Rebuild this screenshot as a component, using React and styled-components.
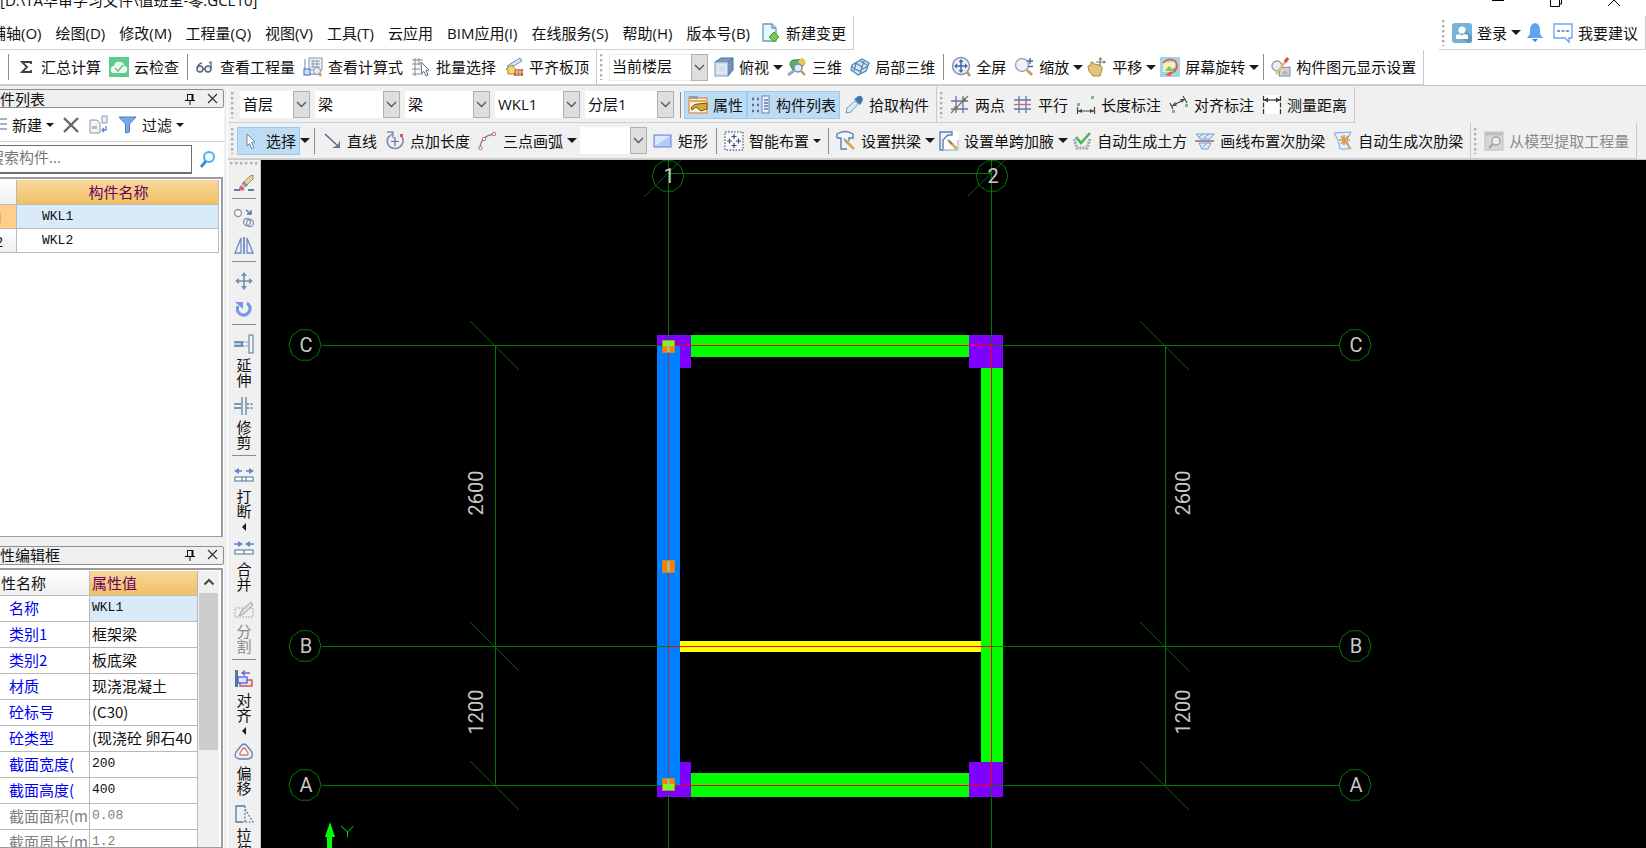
import React from "react";
import styled, { createGlobalStyle, css } from "styled-components";

const Global = createGlobalStyle`
  * { box-sizing: border-box; }
  body { margin: 0; background: #fff; overflow: hidden; }
  body, button, select, input, table {
    font-family: "Open Sans", "Noto Sans CJK SC", sans-serif;
    font-size: 15px;
    color: #111;
  }
  button { border: 0; padding: 0; margin: 0; background: none; white-space: nowrap; }
`;

/* ---------- page frame ---------- */
const Page = styled.div`
  display: flex;
  flex-direction: column;
  height: 100vh;
  background: #fff;
`;
const TitleBar = styled.header`
  display: flex;
  align-items: center;
  justify-content: space-between;
  flex: none;
  height: 32px;
  margin-top: -16px;
  padding-right: 24px;
`;
const Title = styled.h1`
  margin: 0;
  font-size: 15px;
  font-weight: 400;
  line-height: 20px;
  white-space: nowrap;
`;
const WindowButtons = styled.div`
  display: flex;
  gap: 42px;
  svg { display: block; width: 16px; height: 16px; }
`;
const Row = styled.div`
  display: flex;
  justify-content: ${(p) => (p.$start ? "flex-start" : "space-between")};
  flex: none;
  height: ${(p) => p.$h || 36}px;
  background: ${(p) => (p.$grey ? "#f0f0f0" : "#fff")};
  ${(p) => p.$line && css`border-bottom: 1px solid #c9c9c9;`}
`;
const Section = styled.div`
  display: flex;
  align-items: center;
  padding-right: 3px;
  padding-left: ${(p) => (p.$first ? "4px" : "0")};
  border-right: 1px solid #c9c9c9;
  border-bottom: 1px solid #d0d0d0;
`;
const MenuBar = styled.nav`
  display: flex;
  align-items: center;
  margin-left: -16px;
  padding-right: 3px;
  border-right: 1px solid #d0d0d0;
  border-bottom: 1px solid #d0d0d0;
`;
const MenuItem = styled.button`
  padding: 0 7px;
  line-height: 24px;
`;
const Grip = styled.span`
  flex: none;
  width: ${(p) => (p.$flat ? "28px" : "3px")};
  height: ${(p) => (p.$flat ? "3px" : "26px")};
  margin: ${(p) => (p.$flat ? "2px 0 4px" : "0 3px")};
  background-image: radial-gradient(circle at 1px 1px, #b0b0b0 1px, transparent 2px);
  background-size: ${(p) => (p.$flat ? "5px 3px" : "3px 5px")};
`;
const Sep = styled.span`
  flex: none;
  width: ${(p) => (p.$flat ? "24px" : "1px")};
  height: ${(p) => (p.$flat ? "1px" : "26px")};
  margin: ${(p) => (p.$flat ? "1px 0 5px" : "0 3px 0 4px")};
  background: #8c8c8c;
`;
const ToolButton = styled.button`
  display: flex;
  align-items: center;
  gap: 5px;
  height: 28px;
  padding: 0 4px;
  line-height: 24px;
  color: ${(p) => (p.$off ? "#8a8a8a" : "#111")};
  ${(p) => p.$on && css`background: #bddcf4; box-shadow: inset 0 0 0 1px #99ccf5;`}
`;
const DropButton = styled.button`
  width: ${(p) => (p.$small ? "11px" : "10px")};
  height: 28px;
  display: flex;
  align-items: center;
  justify-content: ${(p) => (p.$small ? "flex-start" : "flex-end")};
  &::before {
    content: "";
    border: solid transparent;
    border-width: ${(p) => (p.$small ? "4px 4px 0" : "5px 5px 0")};
    border-top-color: #1a1a1a;
  }
`;
const ComboBox = styled.label`
  display: grid;
  width: ${(p) => p.$w}px;
  height: 27px;
  margin: 0 2px 0 3px;
  background: #fff;
  ${(p) => p.$framed && css`box-shadow: inset 0 0 0 1px #ececec;`}
  select {
    grid-area: 1 / 1;
    appearance: none;
    border: 0;
    background: none;
    padding: 0 18px 2px 3px;
    margin: 0;
    min-width: 0;
  }
`;
const ComboArrow = styled.span`
  grid-area: 1 / 1;
  justify-self: end;
  display: grid;
  place-items: center;
  width: 17px;
  border: 1px solid #b0b0b0;
  background: #dedede;
  pointer-events: none;
`;
const Svg = styled.svg`
  flex: none;
  display: block;
  width: 20px;
  height: 20px;
  overflow: visible;
`;

/* ---------- icons ---------- */
const P = ({ d, c = "#5b6f96", w = 1.3, f = "none" }) => (
  <path d={d} stroke={c} strokeWidth={w} fill={f} />
);
const icons = {
  newDoc: (
    <>
      <P d="M2 1H11L15 5V18H2Z" c="#5e9fc4" f="#e8f6fd" />
      <P d="M11 1V5H15" c="#5e9fc4" f="#bfe1f3" />
      <P d="M13 9L18 14L13 19L8 14Z" c="#4a9a2c" w={1} f="#74c94a" />
    </>
  ),
  user: (
    <>
      <rect x="0" y="0" width="20" height="20" rx="3" fill="#76b3d6" />
      <path d="M10 16L16 20H17Q20 20 20 17V13L13 7Z" fill="#5c9cc3" />
      <circle cx="10" cy="7" r="3.6" fill="#fff" />
      <path d="M4 12L8 11L10 13L12 11L16 12V16H4Z" fill="#fff" />
    </>
  ),
  bell: (
    <>
      <path d="M10 0Q15 1 15 7V11L18 15H2L5 11V7Q5 1 10 0Z" fill="#5ba4f2" />
      <path d="M7 16H13L10 19Z" fill="#4b78b8" />
    </>
  ),
  chat: (
    <>
      <P d="M1 1H19V15H16V19L12 15H1Z" c="#6aa9ee" w={1.4} f="#fff" />
      <path d="M4 8H16" stroke="#4b78c0" strokeWidth="1.5" strokeDasharray="3 1.5" />
    </>
  ),
  sum: <P d="M15 7V5H6L11 10L6 15H15V13" c="#404040" w={1.8} />,
  cloudCheck: (
    <>
      <rect width="20" height="20" fill="#5fcb8b" />
      <path d="M5 16Q1 16 2 12Q2 9 5 9Q6 4 11 5Q15 5 15 9Q19 9 18 13Q18 16 15 16Z" fill="#f1faf4" />
      <P d="M6 11L9 14L14 8" c="#5fcb8b" w={1.6} />
    </>
  ),
  glasses: (
    <>
      <circle cx="5" cy="12" r="3" fill="#e7edf3" stroke="#5a6675" strokeWidth="1.4" />
      <circle cx="13" cy="12" r="3" fill="#e7edf3" stroke="#5a6675" strokeWidth="1.4" />
      <P d="M8 12H10M2 11Q3 7 7 6M16 12V5L14 6" c="#5a6675" />
    </>
  ),
  calcView: (
    <>
      <rect x="6" y="1" width="13" height="12" fill="#eef1f8" stroke="#8b94ad" />
      <P d="M8 4H17M8 7H17M8 10H17M10 3V11M14 3V11" c="#8b94ad" w={0.9} />
      <P d="M2 2V17H18" c="#8fa0cc" />
      <rect x="1" y="12" width="6" height="6" fill="#cfdcff" stroke="#4a66c0" />
      <circle cx="14" cy="14" r="3.5" fill="#e9eef6" stroke="#8b94ad" />
      <P d="M16 16L18 19" c="#e39b45" w={2.6} />
    </>
  ),
  batch: (
    <>
      <P d="M1 3H12M1 7H9M1 12H9M1 17H12M4 1V19M8 1V8" c="#7d8699" w={1} />
      <path d="M10 5L18 13L15 13.5L17 18L15 19L13 14.5L10.500 16Z" fill="#fff" stroke="#5b6884" />
    </>
  ),
  flatTop: (
    <>
      <path d="M3 9L16 1L18 4L6 11Z" fill="#dbe6fa" stroke="#6b86bd" />
      <path d="M2 12L8 8L12 13V17H4V13Z" fill="#f6d96a" stroke="#a3822b" />
      <path d="M11 12H19V19H10V16Z" fill="#c5684c" />
      <P d="M13 12V19M16 12V19M11 15H19" c="#f5dcd0" w={0.8} />
    </>
  ),
  cube: (
    <>
      <path d="M1 5L7 1H19L14 5Z" fill="#7d9cc4" stroke="#4d6f9d" />
      <path d="M14 5L19 1V13L14 19Z" fill="#7592b8" stroke="#4d6f9d" />
      <rect x="1" y="5" width="13" height="14" fill="#cfe0ef" stroke="#7ca0c4" />
      <P d="M4 8H12V16H4Z" c="#eaf4fb" w={1} />
    </>
  ),
  view3d: (
    <>
      <path d="M3 8Q3 2 9 3L16 2L18 7L12 12L6 13Z" fill="#5fae6e" stroke="#39804b" />
      <circle cx="15" cy="5" r="3.5" fill="#eac750" />
      <P d="M1 18L8 13" c="#a1a9b5" w={3} />
      <circle cx="11" cy="11" r="4" fill="#e1eef7" stroke="#6d8fb0" strokeWidth="1.4" />
      <P d="M14 14L18 18" c="#c7963f" w={2.4} />
    </>
  ),
  local3d: (
    <>
      <path d="M2 8L12 2L19 6L16 14L8 18L1 13Z" fill="#d5e6f4" stroke="#5486b3" strokeWidth="1.3" />
      <P d="M6 6L12 10L10 17M10 4L17 8M2 10L9 14L18 9M6 6L4 14M12 10L14 4" c="#5486b3" />
    </>
  ),
  fullView: (
    <>
      <circle cx="10" cy="9" r="8.500" fill="#e9eff9" stroke="#8592ab" strokeWidth="1.4" />
      <P d="M10 4V14M5 9H15" c="#4b64a5" w={1.5} />
      <path d="M10 2L12.500 5H7.500ZM10 16L12.500 13H7.500ZM3 9L6 6.500V11.500ZM17 9L14 6.500V11.500Z" fill="#4b64a5" />
      <P d="M16 15L19 19" c="#cf9148" w={2.6} />
    </>
  ),
  zoom: (
    <>
      <circle cx="8" cy="8" r="6.500" fill="#eef3fa" stroke="#9aa6ba" strokeWidth="1.4" />
      <P d="M13 13L18 18" c="#cf9f48" w={2.8} />
      <P d="M16 1V7M13 4H19M14 9.500H19" c="#4b64a5" w={1.4} />
    </>
  ),
  pan: (
    <>
      <path d="M1 10Q1 8 4 8L4 5Q6 4 7 7L12 8Q16 9 15 13L13 19H6L2 14Z" fill="#e6c477" stroke="#a98645" />
      <P d="M13 1V9M9 5H18" c="#777" w={1.2} />
      <path d="M13.500 0L15.500 2.500H11.500ZM19 5L16.500 3V7Z" fill="#777" />
    </>
  ),
  screenRotate: (
    <>
      <rect width="20" height="20" fill="#9fd6ea" />
      <rect x="3" y="5" width="12" height="10" fill="#f3f2b4" />
      <path d="M5 14L9 9L12 12L16 10V14Z" fill="#7dc07a" />
      <P d="M3 6Q9 0 15 4Q19 9 15 14L8 18" c="#e35a4e" w={1.7} />
      <path d="M5 18L11 14V19Z" fill="#e35a4e" />
    </>
  ),
  display: (
    <>
      <circle cx="6" cy="9" r="5" fill="#eaf0f7" stroke="#8f9cb0" strokeWidth="1.3" />
      <path d="M9 11L19 10V19H8Z" fill="#c9d5ea" stroke="#7388b0" />
      <P d="M5 17L15 4" c="#e2bd72" w={2.6} />
      <P d="M14 5L17 1" c="#c5534a" w={3} />
      <path d="M14 13L17 17H11Z" fill="#e9a544" />
    </>
  ),
  props: (
    <>
      <rect x="1" y="3" width="18" height="15" fill="#fdf1dc" stroke="#dd9a4d" strokeWidth="1.4" />
      <path d="M1 1H10V4H1Z" fill="#9a9a9a" />
      <P d="M2 6H18" c="#e5a661" w={2} />
      <path d="M3 13Q7 8 10 9L19 8V14L13 16L8 12L4 15Z" fill="#d9a830" stroke="#6e5418" />
    </>
  ),
  list: (
    <>
      <path d="M1 4H4M1 10H4M1 16H4M6 4H9M6 10H9M6 16H9" stroke="#5d6b85" strokeWidth="2.4" strokeDasharray="2 1" />
      <rect x="11" y="1" width="7" height="17" fill="#eaf1fb" stroke="#6c83ae" />
      <P d="M13 5H17M13 8H17M13 11H17M13 14H17" c="#5878b8" />
    </>
  ),
  picker: (
    <>
      <path d="M3 13L11 6L14 9L7 17L2 18Z" fill="#dcebf6" stroke="#6e9bc2" />
      <path d="M10 4L16 10L18 7Q20 3 17 1Q14 0 12 3Z" fill="#3f74ad" />
    </>
  ),
  twoPoints: (
    <>
      <P d="M1 6H18M1 14H18M6 1V18M13 1V18" c="#6773a8" />
      <P d="M1 18L18 1" c="#c75454" />
      <circle cx="6" cy="13" r="2" fill="#3f9d45" />
      <circle cx="14" cy="5" r="2" fill="#3f9d45" />
    </>
  ),
  parallel: (
    <>
      <P d="M1 5H18M1 14H18M6 1V18M13 1V18" c="#6773a8" />
      <P d="M1 9.500H18" c="#d96464" />
    </>
  ),
  lengthDim: (
    <>
      <P d="M1.500 12V19M18.500 12V19M2 16H18" c="#444" w={1.2} />
      <path d="M2 16L6 14V18ZM18 16L14 14V18Z" fill="#444" />
      <rect x="1" y="8" width="3" height="3" fill="#6cc76c" />
      <rect x="15" y="1" width="3" height="3" fill="#6cc76c" />
    </>
  ),
  alignDim: (
    <>
      <P d="M1 8L4 14M14 1L18 8M3 11L16 4" c="#444" w={1.2} />
      <path d="M3 11L6 7L8 11ZM16 4L11 4L13 8Z" fill="#555" />
      <rect x="3" y="15" width="3" height="3" fill="#6cc76c" />
      <rect x="16" y="9" width="3" height="3" fill="#6cc76c" />
    </>
  ),
  measure: (
    <>
      <rect width="20" height="19" fill="#fff" />
      <path d="M1.500 1V19M18.500 1V19" stroke="#333" strokeWidth="1.3" strokeDasharray="5 1.5" />
      <P d="M2 5H18" c="#333" />
      <path d="M2 5L6 2.500V7.500ZM18 5L14 2.500V7.500Z" fill="#333" />
    </>
  ),
  cursor: <path d="M6 3L14 11L10.500 11.500L13 16.500L10.500 17.500L8.500 12.500L6 15Z" fill="#fff" stroke="#7a8494" />,
  line: (
    <>
      <P d="M3 3L16 15" c="#4a5c7a" w={1.2} />
      <path d="M18 17V9L16 14L10 17Z" fill="#5d7296" />
    </>
  ),
  pointLength: (
    <>
      <P d="M4 5Q0 11 5 16Q10 19 15 16Q20 11 17 6" c="#7c8fae" w={1.7} />
      <P d="M2 1H8V7M8 2L4 6" c="#7c8fae" w={1.4} />
      <P d="M10 6V15M6 10.500H14" c="#5b7197" w={1.2} />
      <rect x="15" y="3" width="3" height="3" fill="#d95c5c" />
    </>
  ),
  arc: (
    <>
      <P d="M2 17Q3 5 16 3" c="#7085b0" w={1.3} />
      <circle cx="2.500" cy="17" r="1.700" fill="#fff" stroke="#d9664f" />
      <circle cx="6" cy="8" r="1.700" fill="#fff" stroke="#d9664f" />
      <circle cx="16" cy="3" r="1.700" fill="#fff" stroke="#d9664f" />
    </>
  ),
  rect: (
    <>
      <rect x="1" y="4" width="17" height="12" fill="#b6cafa" stroke="#6784cf" />
      <path d="M2 5H17L2 15Z" fill="#dbe6ff" />
    </>
  ),
  smart: (
    <>
      <rect x="1" y="1" width="18" height="18" fill="#f7f9fc" stroke="#5f6f8f" strokeWidth="1.4" strokeDasharray="1.500 1.500" />
      <P d="M10 3V8M7.500 5.500H12.500M10 12V17M7.500 14.500H12.500M5.500 7.500V12.500M3 10H8M14.500 7.500V12.500M12 10H17" c="#3d4c6b" w={1.2} />
    </>
  ),
  archBeam: (
    <>
      <P d="M1 7V3Q9 -2 17 3V7H13V10M1 7H5V18H11" c="#5e7fae" w={1.4} f="#eef4fb" />
      <P d="M10 10L18 18" c="#d7a94e" w={2.6} />
      <P d="M8 8L12 12" c="#9a9a9a" w={2} />
    </>
  ),
  haunch: (
    <>
      <rect width="20" height="20" fill="#fff" />
      <P d="M1 1H13V4H9L4 9V19H1Z" c="#5e7fae" w={1.4} f="#eef4fb" />
      <P d="M4 19H19V9" c="#a9bfdc" />
      <P d="M11 11L18 18" c="#d7a94e" w={2.6} />
      <P d="M9 9L13 13" c="#888" w={2} />
    </>
  ),
  earth: (
    <>
      <path d="M2 8L5 17H15L18 8" fill="none" stroke="#9fa6b5" strokeWidth="3" strokeDasharray="2 1" />
      <P d="M4 6L9 12L18 2" c="#48b552" w={2.6} />
    </>
  ),
  drawRib: (
    <>
      <path d="M1 3H19L15 8H5Z" fill="#d9ebfa" stroke="#6a9fd1" />
      <path d="M4 12H16L13 18H7Z" fill="#d9ebfa" stroke="#6a9fd1" />
      <P d="M0 10H19" c="#a66d6d" w={1.6} />
      <P d="M4 6L8 3M9 7L14 3M8 16L12 12" c="#6a9fd1" w={1} />
    </>
  ),
  autoRib: (
    <>
      <path d="M1 2L18 1L14 9L16 18L7 18L5 9Z" fill="#e4f1fc" stroke="#71a8d8" />
      <P d="M11 4V14M6 9H17M8 5L18 18M15 5L8 13" c="#dc9b4a" w={1.7} />
    </>
  ),
  extract: (
    <>
      <rect x="1" y="1" width="18" height="18" fill="#d6d6d6" stroke="#bdbdbd" />
      <P d="M1 3H19" c="#bdbdbd" w={2.500} />
      <circle cx="12" cy="10" r="4" fill="#eee" stroke="#a3a3a3" strokeWidth="1.400" />
      <P d="M9 13L5 17" c="#a3a3a3" w={2} />
    </>
  ),
  menuLines: <P d="M8 4H20M8 9H20M8 14H20" c="#8a99b3" w={1.4} />,
  remove: <P d="M3 3L17 17M17 3L3 17" c="#666" w={2.400} />,
  copyTo: (
    <>
      <path d="M1 5H8L11 8V18H1Z" fill="#f2f4f8" stroke="#8c97ab" />
      <rect x="3" y="11" width="5" height="3" fill="#aeb8c9" />
      <path d="M13 1H18V8H13Z" fill="#eaf0fb" stroke="#8c97ab" />
      <P d="M13 15H17V11M15 13L13 15L15 17" c="#6a84d6" w={1.400} />
    </>
  ),
  filter: <path d="M2 2H19L12.500 9V17L8.500 18V9Z" fill="#7ba6e6" stroke="#4f7cc6" />,
  search: (
    <>
      <circle cx="11" cy="7" r="5" fill="#eef9ff" stroke="#49b1e8" strokeWidth="2" />
      <P d="M8 11L3 17" c="#2f92d8" w={2.800} />
    </>
  ),
  eraser: (
    <>
      <P d="M0 17H6M14 17H20" c="#5c7fa3" w={2} />
      <path d="M8 11L16 3L19 2V6L11 14Z" fill="#f2d27a" stroke="#8b8f9d" />
      <path d="M7 12L11 16L8 18Q5 17 5 15Z" fill="#e05c86" />
      <P d="M9 9L13 13" c="#7d8797" w={2} />
    </>
  ),
  copy: (
    <>
      <circle cx="4" cy="5" r="3.500" fill="#f8f8f8" stroke="#8794a8" strokeWidth="1.300" />
      <circle cx="13" cy="14" r="3.500" fill="none" stroke="#8794a8" strokeWidth="1.300" />
      <circle cx="16" cy="15" r="3.500" fill="none" stroke="#8794a8" strokeWidth="1.300" />
      <P d="M12 2L17 6M17 2V6H13" c="#4c72b0" w={1.400} />
    </>
  ),
  mirror: (
    <>
      <path d="M1 17L7 2V17ZM19 17L13 2V17Z" fill="#e9effb" stroke="#6f8ac0" strokeWidth="1.300" />
      <P d="M10 1V18" c="#6f8ac0" w={1.800} />
    </>
  ),
  move: (
    <>
      <P d="M10 3V17M3 10H17" c="#728fae" w={1.600} />
      <path d="M10 1L13 5H7ZM10 19L13 15H7ZM1 10L5 7V13ZM19 10L15 7V13Z" fill="#728fae" />
    </>
  ),
  rotate: (
    <>
      <P d="M13 4Q18 8 15 13Q11 18 6 15Q2 12 4 7" c="#7498e0" w={3} />
      <path d="M1 3H9V10Z" fill="#7498e0" />
    </>
  ),
  extend: (
    <>
      <P d="M0 8H8V12H0" c="#53789f" w={1.600} f="#b9cfe4" />
      <path d="M9 8H14M9 12H14" stroke="#53789f" strokeDasharray="1.500 1.500" />
      <rect x="15" y="1" width="4" height="18" fill="#eef4fa" stroke="#53789f" />
    </>
  ),
  trim: (
    <>
      <P d="M0 8H7M0 12H7" c="#53789f" w={1.300} />
      <path d="M13 8H20M13 12H20" stroke="#53789f" strokeWidth="1.300" strokeDasharray="2 1.500" />
      <path d="M8 1V19M12 1V19" stroke="#53789f" strokeWidth="1.200" />
    </>
  ),
  split: (
    <>
      <P d="M2 6H8M12 6H18" c="#5f84cb" w={1.400} />
      <path d="M0 6L5 3V9ZM20 6L15 3V9Z" fill="#5f84cb" />
      <rect x="1" y="12" width="18" height="4" fill="#fff" stroke="#6784a6" strokeWidth="1.200" />
      <P d="M8 12V16M12 12V16" c="#6784a6" />
    </>
  ),
  merge: (
    <>
      <P d="M0 6H6M14 6H20" c="#5f84cb" w={1.400} />
      <path d="M9 6L4 3V9ZM11 6L16 3V9Z" fill="#5f84cb" />
      <rect x="1" y="12" width="18" height="4" fill="#fff" stroke="#6784a6" strokeWidth="1.200" />
      <P d="M10 12V16" c="#6784a6" />
    </>
  ),
  divide: (
    <>
      <path d="M1 8H19V17H1Z" fill="none" stroke="#adadad" strokeDasharray="2 1" />
      <path d="M5 16L8 10L17 2L19 5L11 13Z" fill="#ddd" stroke="#a3a3a3" />
    </>
  ),
  align: (
    <>
      <P d="M2.500 1V18" c="#4c7f95" w={3} />
      <rect x="6" y="11" width="12" height="6" fill="#f6dede" stroke="#b74b4b" strokeWidth="1.300" />
      <rect x="4" y="8" width="9" height="6" fill="#dfe6ff" stroke="#4a5fe0" strokeWidth="1.300" />
      <P d="M8 4H16M11 1.500L8 4L11 6.500" c="#6f63c4" />
    </>
  ),
  offset: (
    <>
      <path d="M6 5Q10 -1 14 5L18 10Q20 17 13 17H6Q-1 16 2 10Z" fill="#e4eff8" stroke="#5b87a8" strokeWidth="1.300" />
      <path d="M8 8Q10 4 12 8L14 11Q14 14 11 13H8Q5 13 6 11Z" fill="#fff" stroke="#e0705c" strokeWidth="1.300" />
    </>
  ),
  stretch: (
    <>
      <P d="M11 2H2V18H9" c="#53789f" w={1.300} />
      <path d="M11 2V18M11 5L19 18H9" fill="none" stroke="#53789f" strokeWidth="1.200" strokeDasharray="2 1.500" />
    </>
  ),
};
const Icon = ({ name }) => (
  <Svg viewBox="0 0 20 20" aria-hidden="true">{icons[name]}</Svg>
);

/* ---------- toolbar parts ---------- */
const Tool = ({ icon, label, on, off, drop }) => (
  <>
    <ToolButton $on={on} $off={off} disabled={off} aria-label={label || icon}>
      <Icon name={icon} />
      {label}
    </ToolButton>
    {drop && <DropButton $small={drop === "small"} aria-label={`${label} 选项`} />}
  </>
);
const Combo = ({ w, value, name, framed }) => (
  <ComboBox $w={w} $framed={framed}>
    <select aria-label={name} defaultValue={value}>
      <option>{value}</option>
    </select>
    <ComboArrow>
      <svg width="11" height="7" viewBox="0 0 11 7">
        <path d="M1 1L5.500 5.500L10 1" fill="none" stroke="#555" strokeWidth="1.300" />
      </svg>
    </ComboArrow>
  </ComboBox>
);

/* ---------- left side ---------- */
const Body = styled.div`
  flex: 1;
  display: flex;
  min-height: 0;
  background: #f0f0f0;
`;
const Aside = styled.aside`
  flex: none;
  display: flex;
  flex-direction: column;
  gap: 9px;
  width: 242px;
  margin-left: -18px;
  padding-top: 3px;
  background: #f0f0f0;
`;
const Panel = styled.section`
  display: flex;
  flex-direction: column;
  gap: ${(p) => (p.$grow ? "3px" : "0")};
  flex: ${(p) => (p.$grow ? "1" : "0 0 59%")};
  min-height: 0;
  background: #fff;
`;
const PanelHead = styled.header`
  display: flex;
  align-items: center;
  flex: none;
  height: 19px;
  padding: 0 4px 0 2px;
  border: 1px solid #8f8f8f;
  border-radius: 2px;
  background: #efefef;
  h2 { flex: 1; margin: 0; font-size: 15px; font-weight: 400; line-height: 16px; }
  svg { display: block; margin-left: 11px; }
`;
const PanelTools = styled.div`
  display: flex;
  align-items: center;
  flex: none;
  height: 34px;
  padding-left: 1px;
  border-bottom: 1px solid #d0d0d0;
`;
const SearchRow = styled.div`
  display: flex;
  flex: none;
  height: 29px;
  margin: 3px 0;
  input {
    width: 210px;
    padding: 0 5px 4px 6px;
    border: 1px solid #6f6f6f;
    border-width: 1px 1px 2px;
    outline: 0;
    &::placeholder { color: #777; opacity: 1; }
  }
  button { display: grid; place-items: center; width: 32px; }
`;
const TableBox = styled.div`
  flex: 1;
  display: flex;
  align-items: flex-start;
  min-height: 0;
  overflow: hidden;
  margin-right: 1px;
  padding: 1px 2px 0 0;
  border: solid #9a9ca0;
  border-width: 2px 2px 1px 0;
`;
const DataTable = styled.table`
  flex: 1;
  table-layout: fixed;
  border-collapse: separate;
  border-spacing: 0;
  th, td {
    overflow: hidden;
    border: solid #b9b9b9;
    border-width: 0 1px 1px 0;
    height: ${(p) => p.$row}px;
    padding: 0 0 0 2px;
    text-align: left;
    font-weight: 400;
    line-height: 20px;
    white-space: nowrap;
  }
`;
const NumberCol = styled.col`
  width: 35px;
`;
const LabelCol = styled.col`
  width: 108px;
`;
const goldHead = css`
  background: linear-gradient(#f9d69c, #f0c162);
  color: #660066;
`;
const plainHead = css`
  background: linear-gradient(#ffffff, #f0f0f0);
`;
const HeadCell = styled.th`
  && {
    height: 25px;
    padding-left: ${(p) => (p.$gold ? "2px" : "4px")};
    text-align: ${(p) => (p.$center ? "center" : "left")};
    ${(p) => (p.$gold ? goldHead : plainHead)}
  }
`;
const NumberCell = styled.td`
  && {
    text-align: center;
    padding: 0;
    ${(p) => (p.$on ? "background: #ffcf87; color: #660066;" : plainHead)}
  }
`;
const NameCell = styled.td`
  && {
    padding-left: 25px;
    font: 13px/20px "Liberation Mono", monospace;
    ${(p) => p.$on && "background: #d9eaf9;"}
  }
`;
const LabelCell = styled.th`
  && {
    padding-left: 27px;
    font-family: "Noto Sans CJK SC", sans-serif;
    color: ${(p) => (p.$off ? "#808080" : "#0000f0")};
  }
`;
const ValueCell = styled.td`
  && {
    font-family: "Noto Sans CJK SC", sans-serif;
    ${(p) => p.$latin && `font: 13px/20px "Liberation Mono", monospace;`}
    ${(p) => p.$off && "color: #808080;"}
    ${(p) => p.$on && "background: #d9eaf9;"}
  }
`;
const ScrollBar = styled.div`
  align-self: stretch;
  display: flex;
  flex-direction: column;
  width: 21px;
  padding: 0 1px;
  background: #f0f0f0;
  button { display: grid; place-items: center; height: 22px; }
  span { height: 157px; background: #cdcdcd; }
`;
const PanelHeader = ({ title }) => (
  <PanelHead>
    <h2>{title}</h2>
    <svg width="12" height="12" viewBox="0 0 12 12" fill="none" stroke="#111">
      <path d="M3.500 1V7M3 1.500H9M1 7.500H11M6 8V12" />
      <path d="M8.500 1V7" strokeWidth="2" />
    </svg>
    <svg width="12" height="12" viewBox="0 0 12 12" fill="none" stroke="#333" strokeWidth="1.200">
      <path d="M1 1L10 10M10 1L1 10" />
    </svg>
  </PanelHead>
);

const properties = [
  ["名称", "WKL1", { on: true, latin: true }],
  ["类别1", "框架梁", {}],
  ["类别2", "板底梁", {}],
  ["材质", "现浇混凝土", {}],
  ["砼标号", "(C30)", {}],
  ["砼类型", "(现浇砼 卵石40", {}],
  ["截面宽度(", "200", { latin: true }],
  ["截面高度(", "400", { latin: true }],
  ["截面面积(m", "0.08", { latin: true, off: true }],
  ["截面周长(m", "1.2", { latin: true, off: true }],
];

/* ---------- work area ---------- */
const Main = styled.main`
  flex: 1;
  display: flex;
  flex-direction: column;
  min-width: 0;
  margin-left: 3px;
  padding-top: 1px;
  border-left: 1px solid #fff;
`;
const Work = styled.div`
  flex: 1;
  display: flex;
  min-height: 0;
`;
const SideTools = styled.div`
  flex: none;
  display: flex;
  flex-direction: column;
  align-items: center;
  width: 33px;
  overflow: hidden;
  border-right: 1px solid #c9c9c9;
`;
const SideButton = styled.button`
  flex: none;
  display: flex;
  flex-direction: column;
  align-items: center;
  gap: 4px;
  padding: 4px 0;
  color: ${(p) => (p.$off ? "#8a8a8a" : "#111")};
  span { width: 15px; line-height: 15px; white-space: normal; }
`;
const SideArrow = styled.i`
  height: 7px;
  &::before {
    content: "";
    display: block;
    border: solid transparent;
    border-width: 4px 4px 4px 0;
    border-right-color: #1a1a1a;
  }
`;
const Canvas = styled.svg`
  flex: 1;
  min-width: 0;
  height: 100%;
  background: #000;
  text {
    font-family: Roboto, "Liberation Sans", sans-serif;
    font-size: 20px;
    fill: #c8c8c8;
    text-anchor: middle;
  }
`;
const SideTool = ({ icon, label, off, drop }) => (
  <SideButton $off={off} disabled={off} aria-label={label || icon}>
    <Icon name={icon} />
    {label && <span>{label}</span>}
    {drop && <SideArrow />}
  </SideButton>
);

const GREEN = "#007800";
const decagon = (cx, cy, r) =>
  Array.from({ length: 10 }, (_, i) => {
    const a = (i * Math.PI) / 5;
    return `${cx + r * Math.cos(a)},${cy + r * Math.sin(a)}`;
  }).join(" ");
const Bubble = ({ x, y, label }) => (
  <>
    <polygon points={decagon(x, y, 16)} fill="none" stroke={GREEN} />
    <text x={x + 1} y={y + 7}>{label}</text>
  </>
);
const Handle = ({ y, top, bottom }) => (
  <>
    <rect x="662" y={y} width="13" height="7" fill={top} />
    <rect x="662" y={y + 6} width="13" height="7" fill={bottom} />
    <rect x="662.5" y={y + 0.5} width="12" height="12" fill="none" stroke="#b08850" />
    <path d={`M668.500 ${y + 1}V${y + 12}`} stroke="#7fd8a0" strokeWidth="2" />
  </>
);
const Drawing = () => (
  <Canvas aria-label="梁平面图">
    <g transform="translate(-261 -160)">
      <g fill="#8000ff">
        <rect x="657" y="335" width="34" height="33" />
        <rect x="969" y="335" width="34" height="33" />
        <rect x="657" y="762" width="34" height="35" />
        <rect x="969" y="762" width="34" height="35" />
      </g>
      <g fill="#00ff00">
        <rect x="691" y="335" width="278" height="22" />
        <rect x="691" y="773" width="278" height="24" />
        <rect x="981" y="368" width="22" height="394" />
      </g>
      <rect x="680" y="641" width="301" height="11" fill="#ffff00" />
      <rect x="657" y="346" width="23" height="439" fill="#0080ff" />
      <g stroke={GREEN} fill="none">
        {[345.5, 646.5, 785.5].map((y) => (
          <path key={y} d={`M322 ${y}H668M992 ${y}H1339`} />
        ))}
        <path d="M668.500 160V345M668.500 785V900M991.500 160V345M991.500 785V900" />
        <path d="M668 173.500H992" />
        <path d="M495.500 345V785M1165.500 345V785" />
        {[495, 1165].map((x) =>
          [345, 646, 785].map((y) => (
            <path key={`${x}-${y}`} d={`M${x - 25} ${y - 24}L${x + 24} ${y + 25}`} strokeWidth="0.8" />
          ))
        )}
        <path d="M644 197L681 160M968 196L1005 160" strokeWidth="0.8" />
      </g>
      <path d="M668 345.500H991.500V785.500H668M668 646.500H991" fill="none" stroke="#ff0000" />
      <path d="M668.500 346V785" stroke="#a03050" strokeWidth="1" />
      <Handle y={340} top="#80ff00" bottom="#ff8000" />
      <Handle y={560} top="#ff8000" bottom="#ff8000" />
      <Handle y={778} top="#ff8000" bottom="#80ff00" />
      {[[345, "C"], [646, "B"], [785, "A"]].map(([y, label]) => (
        <React.Fragment key={label}>
          <Bubble x={305} y={y} label={label} />
          <Bubble x={1355} y={y} label={label} />
        </React.Fragment>
      ))}
      <Bubble x={668} y={176} label="1" />
      <Bubble x={992} y={176} label="2" />
      {[483, 1190].map((x) => (
        <React.Fragment key={x}>
          <text transform={`translate(${x} 493) rotate(-90)`}>2600</text>
          <text transform={`translate(${x} 712) rotate(-90)`}>1200</text>
        </React.Fragment>
      ))}
      <path d="M330 822L335 837H332V900H327V837H325Z" fill="#00ff00" />
      <path d="M341 826L347.500 832L353.500 826M347.500 832V837" fill="none" stroke="#00e000" />
    </g>
  </Canvas>
);

const menus = ["辅轴(O)", "绘图(D)", "修改(M)", "工程量(Q)", "视图(V)", "工具(T)", "云应用", "BIM应用(I)", "在线服务(S)", "帮助(H)", "版本号(B)"];

export default function App() {
  return (
    <Page>
      <Global />
      <TitleBar>
        <Title>[D:\TA华审学习文件\值班室-零.GCL10]</Title>
        <WindowButtons>
          <button aria-label="最小化">
            <svg viewBox="0 0 16 16"><path d="M2 8.500H14" stroke="#000" /></svg>
          </button>
          <button aria-label="还原">
            <svg viewBox="0 0 16 16" fill="none" stroke="#000"><path d="M2.500 5.500H11.500V14.500H2.500ZM5 5V2.500H13.500V12H12" /></svg>
          </button>
          <button aria-label="关闭">
            <svg viewBox="0 0 16 16"><path d="M2 2L14 14M14 2L2 14" stroke="#000" /></svg>
          </button>
        </WindowButtons>
      </TitleBar>

      <Row $h={34}>
        <MenuBar>
          {menus.map((m) => <MenuItem key={m}>{m}</MenuItem>)}
          <Tool icon="newDoc" label="新建变更" />
        </MenuBar>
        <Section>
          <Grip />
          <Tool icon="user" label="登录" drop />
          <Tool icon="bell" />
          <Tool icon="chat" label="我要建议" />
        </Section>
      </Row>

      <Row $line $start>
        <Section $first>
          <Sep />
          <Tool icon="sum" label="汇总计算" />
          <Tool icon="cloudCheck" label="云检查" />
          <Sep />
          <Tool icon="glasses" label="查看工程量" />
          <Tool icon="calcView" label="查看计算式" />
          <Tool icon="batch" label="批量选择" />
          <Tool icon="flatTop" label="平齐板顶" />
        </Section>
        <Section>
          <Grip />
          <Combo w={99} value="当前楼层" name="显示范围" framed />
          <Tool icon="cube" label="俯视" drop />
          <Tool icon="view3d" label="三维" />
          <Tool icon="local3d" label="局部三维" />
          <Sep />
          <Tool icon="fullView" label="全屏" />
          <Tool icon="zoom" label="缩放" drop />
          <Tool icon="pan" label="平移" drop />
          <Tool icon="screenRotate" label="屏幕旋转" drop />
          <Sep />
          <Tool icon="display" label="构件图元显示设置" />
        </Section>
      </Row>

      <Body>
        <Aside>
          <Panel>
            <PanelHeader title="构件列表" />
            <PanelTools>
              <Tool icon="menuLines" label="新建" drop="small" />
              <Tool icon="remove" />
              <Tool icon="copyTo" />
              <Tool icon="filter" label="过滤" drop="small" />
            </PanelTools>
            <SearchRow>
              <input placeholder="搜索构件..." aria-label="搜索构件" />
              <button aria-label="搜索"><Icon name="search" /></button>
            </SearchRow>
            <TableBox>
              <DataTable $row={24}>
                <colgroup><NumberCol /><col /></colgroup>
                <thead>
                  <tr><HeadCell /><HeadCell $gold $center>构件名称</HeadCell></tr>
                </thead>
                <tbody>
                  <tr><NumberCell $on>1</NumberCell><NameCell $on>WKL1</NameCell></tr>
                  <tr><NumberCell>2</NumberCell><NameCell>WKL2</NameCell></tr>
                </tbody>
              </DataTable>
            </TableBox>
          </Panel>
          <Panel $grow>
            <PanelHeader title="属性编辑框" />
            <TableBox>
              <DataTable $row={26}>
                <colgroup><LabelCol /><col /></colgroup>
                <thead>
                  <tr><HeadCell>属性名称</HeadCell><HeadCell $gold>属性值</HeadCell></tr>
                </thead>
                <tbody>
                  {properties.map(([label, value, o]) => (
                    <tr key={label}>
                      <LabelCell scope="row" $off={o.off}>{label}</LabelCell>
                      <ValueCell $latin={o.latin} $on={o.on} $off={o.off}>{value}</ValueCell>
                    </tr>
                  ))}
                </tbody>
              </DataTable>
              <ScrollBar>
                <button aria-label="向上滚动">
                  <svg width="12" height="8" viewBox="0 0 12 8"><path d="M1.500 6.500L6 2L10.500 6.500" fill="none" stroke="#444" strokeWidth="2" /></svg>
                </button>
                <span />
              </ScrollBar>
            </TableBox>
          </Panel>
        </Aside>

        <Main>
          <Row $grey $start>
            <Section>
              <Grip />
              <Combo w={70} value="首层" name="楼层" />
              <Combo w={85} value="梁" name="构件类型" />
              <Combo w={85} value="梁" name="构件类别" />
              <Combo w={85} value="WKL1" name="构件" />
              <Combo w={89} value="分层1" name="分层" />
              <Sep />
              <Tool icon="props" label="属性" on />
              <Tool icon="list" label="构件列表" on />
              <Tool icon="picker" label="拾取构件" />
            </Section>
            <Section>
              <Grip />
              <Tool icon="twoPoints" label="两点" />
              <Tool icon="parallel" label="平行" />
              <Tool icon="lengthDim" label="长度标注" />
              <Tool icon="alignDim" label="对齐标注" />
              <Tool icon="measure" label="测量距离" />
            </Section>
          </Row>
          <Row $grey $h={37} $line $start>
            <Section>
              <Grip />
              <Tool icon="cursor" label="选择" on drop />
              <Sep />
              <Tool icon="line" label="直线" />
              <Tool icon="pointLength" label="点加长度" />
              <Tool icon="arc" label="三点画弧" drop />
              <Combo w={67} value="" name="画弧方式" />
              <Tool icon="rect" label="矩形" />
              <Sep />
              <Tool icon="smart" label="智能布置" drop="small" />
              <Sep />
              <Tool icon="archBeam" label="设置拱梁" drop />
              <Tool icon="haunch" label="设置单跨加腋" drop />
              <Tool icon="earth" label="自动生成土方" />
              <Tool icon="drawRib" label="画线布置次肋梁" />
              <Tool icon="autoRib" label="自动生成次肋梁" />
            </Section>
            <Section>
              <Grip />
              <Tool icon="extract" label="从模型提取工程量" off />
            </Section>
          </Row>
          <Work>
            <SideTools>
              <Grip $flat />
              <SideTool icon="eraser" />
              <Sep $flat />
              <SideTool icon="copy" />
              <SideTool icon="mirror" />
              <Sep $flat />
              <SideTool icon="move" />
              <SideTool icon="rotate" />
              <Sep $flat />
              <SideTool icon="extend" label="延伸" />
              <SideTool icon="trim" label="修剪" />
              <Sep $flat />
              <SideTool icon="split" label="打断" drop />
              <SideTool icon="merge" label="合并" />
              <SideTool icon="divide" label="分割" off />
              <Sep $flat />
              <SideTool icon="align" label="对齐" drop />
              <SideTool icon="offset" label="偏移" />
              <SideTool icon="stretch" label="拉伸" />
            </SideTools>
            <Drawing />
          </Work>
        </Main>
      </Body>
    </Page>
  );
}
